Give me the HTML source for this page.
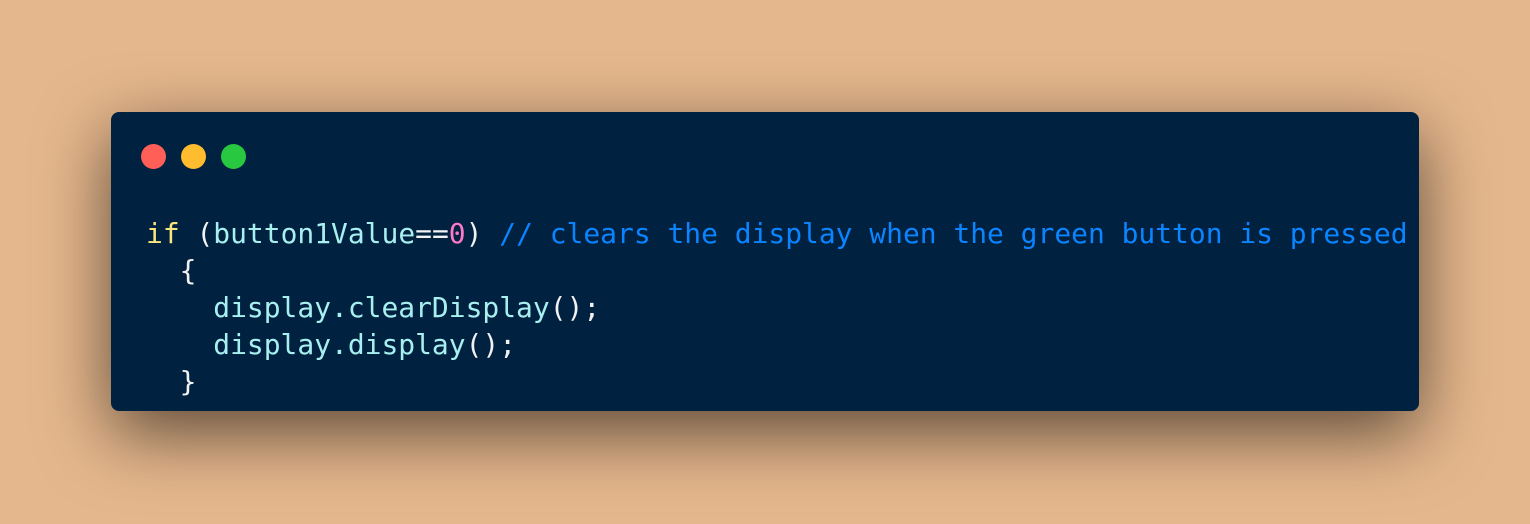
<!DOCTYPE html>
<html><head><meta charset="utf-8"><style>
html,body{margin:0;padding:0}
body{width:1530px;height:524px;background:#e5b78c;position:relative;overflow:hidden}
.win{position:absolute;left:111px;top:112px;width:1308px;height:299px;background:#002140;border-radius:8px;box-shadow:0 22px 70px rgba(0,0,0,0.6)}
.dot{position:absolute;top:144px;width:25px;height:25px;border-radius:50%}
pre{position:absolute;left:146px;top:215px;margin:0;font-family:"DejaVu Sans Mono","Liberation Mono",monospace;font-size:27.95px;line-height:37px;color:#a8f0f0;white-space:pre}
.k{color:#fbe57d}.w{color:#f2f2f2}.n{color:#ff7ac6}.c{color:#0a84ff}
</style></head><body>
<div class="win"></div>
<div class="dot" style="left:141px;background:#ff5f57"></div>
<div class="dot" style="left:181px;background:#febc2e"></div>
<div class="dot" style="left:221px;background:#28c840"></div>
<pre><span class="k">if</span> <span class="w">(</span>button1Value<span class="w">==</span><span class="n">0</span><span class="w">)</span> <span class="c">// clears the display when the green button is pressed</span>
  <span class="w">{</span>
    display.clearDisplay<span class="w">();</span>
    display.display<span class="w">();</span>
  <span class="w">}</span></pre>
</body></html>
